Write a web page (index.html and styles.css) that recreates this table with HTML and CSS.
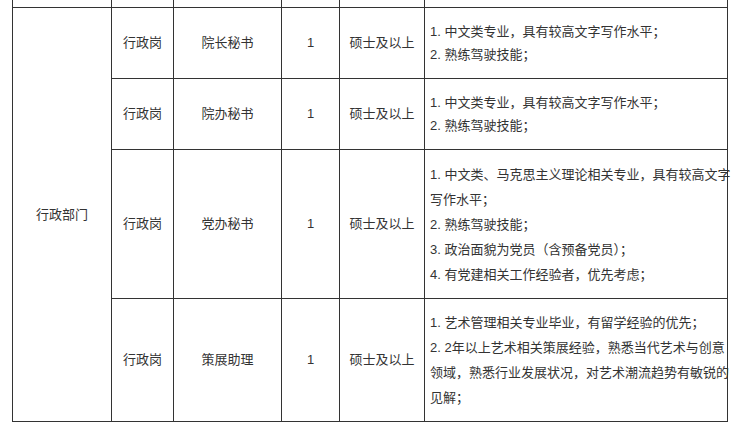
FILE: index.html
```html
<!DOCTYPE html>
<html lang="zh">
<head>
<meta charset="utf-8">
<link rel="stylesheet" href="styles.css">
</head>
<body>
<table class="jobs">
  <colgroup>
    <col class="c-dept"><col class="c-type"><col class="c-post"><col class="c-num"><col class="c-edu"><col class="c-req">
  </colgroup>
  <tr class="r-prev">
    <td></td><td></td><td></td><td></td><td></td><td></td>
  </tr>
  <tr class="r-short">
    <td rowspan="4">行政部门</td>
    <td>行政岗</td>
    <td>院长秘书</td>
    <td>1</td>
    <td>硕士及以上</td>
    <td class="req tight"><p>1. 中文类专业，具有较高文字写作水平；</p><p>2. 熟练驾驶技能；</p></td>
  </tr>
  <tr class="r-short">
    <td>行政岗</td>
    <td>院办秘书</td>
    <td>1</td>
    <td>硕士及以上</td>
    <td class="req tight"><p>1. 中文类专业，具有较高文字写作水平；</p><p>2. 熟练驾驶技能；</p></td>
  </tr>
  <tr class="r-tall">
    <td>行政岗</td>
    <td>党办秘书</td>
    <td>1</td>
    <td>硕士及以上</td>
    <td class="req"><p>1. 中文类、马克思主义理论相关专业，具有较高文字<br>写作水平；</p><p>2. 熟练驾驶技能；</p><p>3. 政治面貌为党员（含预备党员）；</p><p>4. 有党建相关工作经验者，优先考虑；</p></td>
  </tr>
  <tr class="r-mid">
    <td>行政岗</td>
    <td>策展助理</td>
    <td>1</td>
    <td>硕士及以上</td>
    <td class="req"><p>1. 艺术管理相关专业毕业，有留学经验的优先；</p><p>2. 2年以上艺术相关策展经验，熟悉当代艺术与创意<br>领域，熟悉行业发展状况，对艺术潮流趋势有敏锐的<br>见解；</p></td>
  </tr>
</table>
</body>
</html>
```

FILE: styles.css
```css
html, body {
  margin: 0;
  padding: 0;
  background: #ffffff;
}

body {
  font-family: "Liberation Sans", "Noto Sans CJK SC", sans-serif;
  font-size: 13px;
  color: #333333;
  padding-left: 12px;
}

.jobs {
  border-collapse: collapse;
  table-layout: fixed;
  width: 715px;
}

.c-dept { width: 99px; }
.c-type { width: 62px; }
.c-post { width: 108px; }
.c-num { width: 58px; }
.c-edu { width: 85px; }
.c-req { width: 303px; }

.jobs td {
  border: 1px solid #333333;
  text-align: center;
  vertical-align: middle;
  padding: 0;
  line-height: 20px;
}

.r-prev td {
  border-top: none;
  height: 7px;
}

.r-short td { height: 70px; }
.r-tall td { height: 148px; }
.r-mid td { height: 122px; }

.jobs td.req {
  text-align: left;
  padding: 0 4px 0 5px;
  white-space: nowrap;
  line-height: 25px;
}

.jobs td.req.tight {
  line-height: 23px;
}

.req p {
  margin: 0;
}
```
